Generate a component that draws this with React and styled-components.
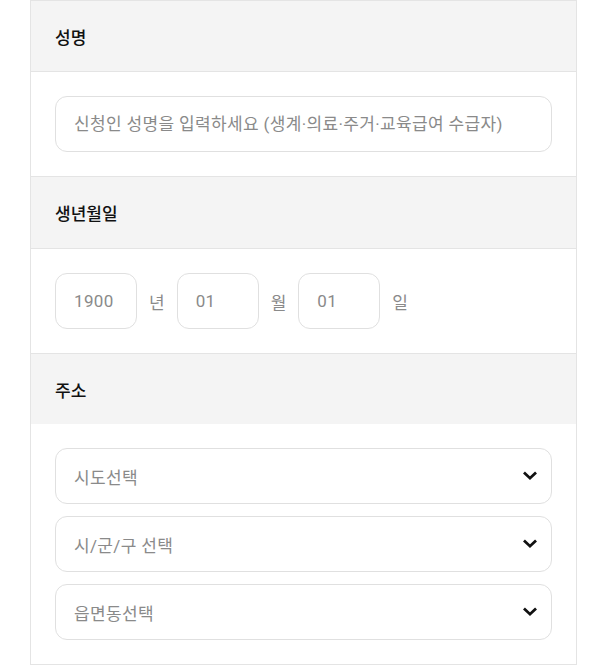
import React from 'react';
import styled, { createGlobalStyle } from 'styled-components';

const GlobalStyle = createGlobalStyle`
  html, body {
    margin: 0;
    padding: 0;
    background: #ffffff;
  }

  body {
    font-family: Roboto, 'Noto Sans CJK KR', sans-serif;
  }

  * {
    box-sizing: border-box;
  }
`;

const StyledPage = styled.div`
  padding: 0 24px 0 30px;
  width: 600px;
`;

const StyledForm = styled.div`
  border: 1px solid #e4e4e4;
  width: 547px;
`;

const StyledHeader = styled.div`
  align-items: center;
  background-color: #f4f4f4;
  border-bottom: ${({ last }) => (last ? 'none' : '1px solid #e4e4e4')};
  color: #111111;
  display: flex;
  font-family: 'Noto Sans CJK KR', sans-serif;
  font-size: 17px;
  font-weight: 500;
  height: ${({ height }) => height}px;
  padding: 0 24px;
`;

const StyledBody = styled.div`
  border-bottom: ${({ last }) => (last ? 'none' : '1px solid #e4e4e4')};
  display: flex;
  flex-direction: column;
  gap: 12px;
  padding: 24px;
`;

const StyledInput = styled.input`
  background: #ffffff;
  border: 1px solid #e0e0e0;
  border-radius: 12px;
  color: #333333;
  font-family: Roboto, 'Noto Sans CJK KR', sans-serif;
  font-size: 17px;
  height: 56px;
  letter-spacing: 0.35px;
  outline: none;
  padding: 0 18px;
  width: ${({ narrow }) => (narrow ? '82px' : '100%')};

  &::placeholder {
    color: #8a8a8a;
  }
`;

const StyledDateRow = styled.div`
  align-items: center;
  display: flex;
`;

const StyledUnit = styled.span`
  color: #8a8a8a;
  font-size: 17px;
  margin: 0 12px;
`;

const StyledSelect = styled.div`
  align-items: center;
  border: 1px solid #e0e0e0;
  border-radius: 12px;
  color: #8a8a8a;
  display: flex;
  font-size: 17px;
  height: 56px;
  justify-content: space-between;
  letter-spacing: 0.35px;
  padding: 0 14px 0 18px;
`;

const Chevron = () => (
  <svg width="14" height="10" viewBox="0 0 14 10">
    <polyline
      points="2,2.5 7,7.2 12,2.5"
      fill="none"
      stroke="#111111"
      strokeWidth="2.8"
      strokeLinecap="square"
    />
  </svg>
);

const selects = ['시도선택', '시/군/구 선택', '읍면동선택'];

const App = () => (
  <StyledPage>
    <GlobalStyle />
    <StyledForm>
      <StyledHeader height={71}>성명</StyledHeader>
      <StyledBody>
        <StyledInput placeholder="신청인 성명을 입력하세요 (생계·의료·주거·교육급여 수급자)" />
      </StyledBody>

      <StyledHeader height={72}>생년월일</StyledHeader>
      <StyledBody>
        <StyledDateRow>
          <StyledInput narrow placeholder="1900" />
          <StyledUnit>년</StyledUnit>
          <StyledInput narrow placeholder="01" />
          <StyledUnit>월</StyledUnit>
          <StyledInput narrow placeholder="01" />
          <StyledUnit>일</StyledUnit>
        </StyledDateRow>
      </StyledBody>

      <StyledHeader height={70} last>
        주소
      </StyledHeader>
      <StyledBody last>
        {selects.map((label) => (
          <StyledSelect key={label}>
            {label}
            <Chevron />
          </StyledSelect>
        ))}
      </StyledBody>
    </StyledForm>
  </StyledPage>
);

export default App;
